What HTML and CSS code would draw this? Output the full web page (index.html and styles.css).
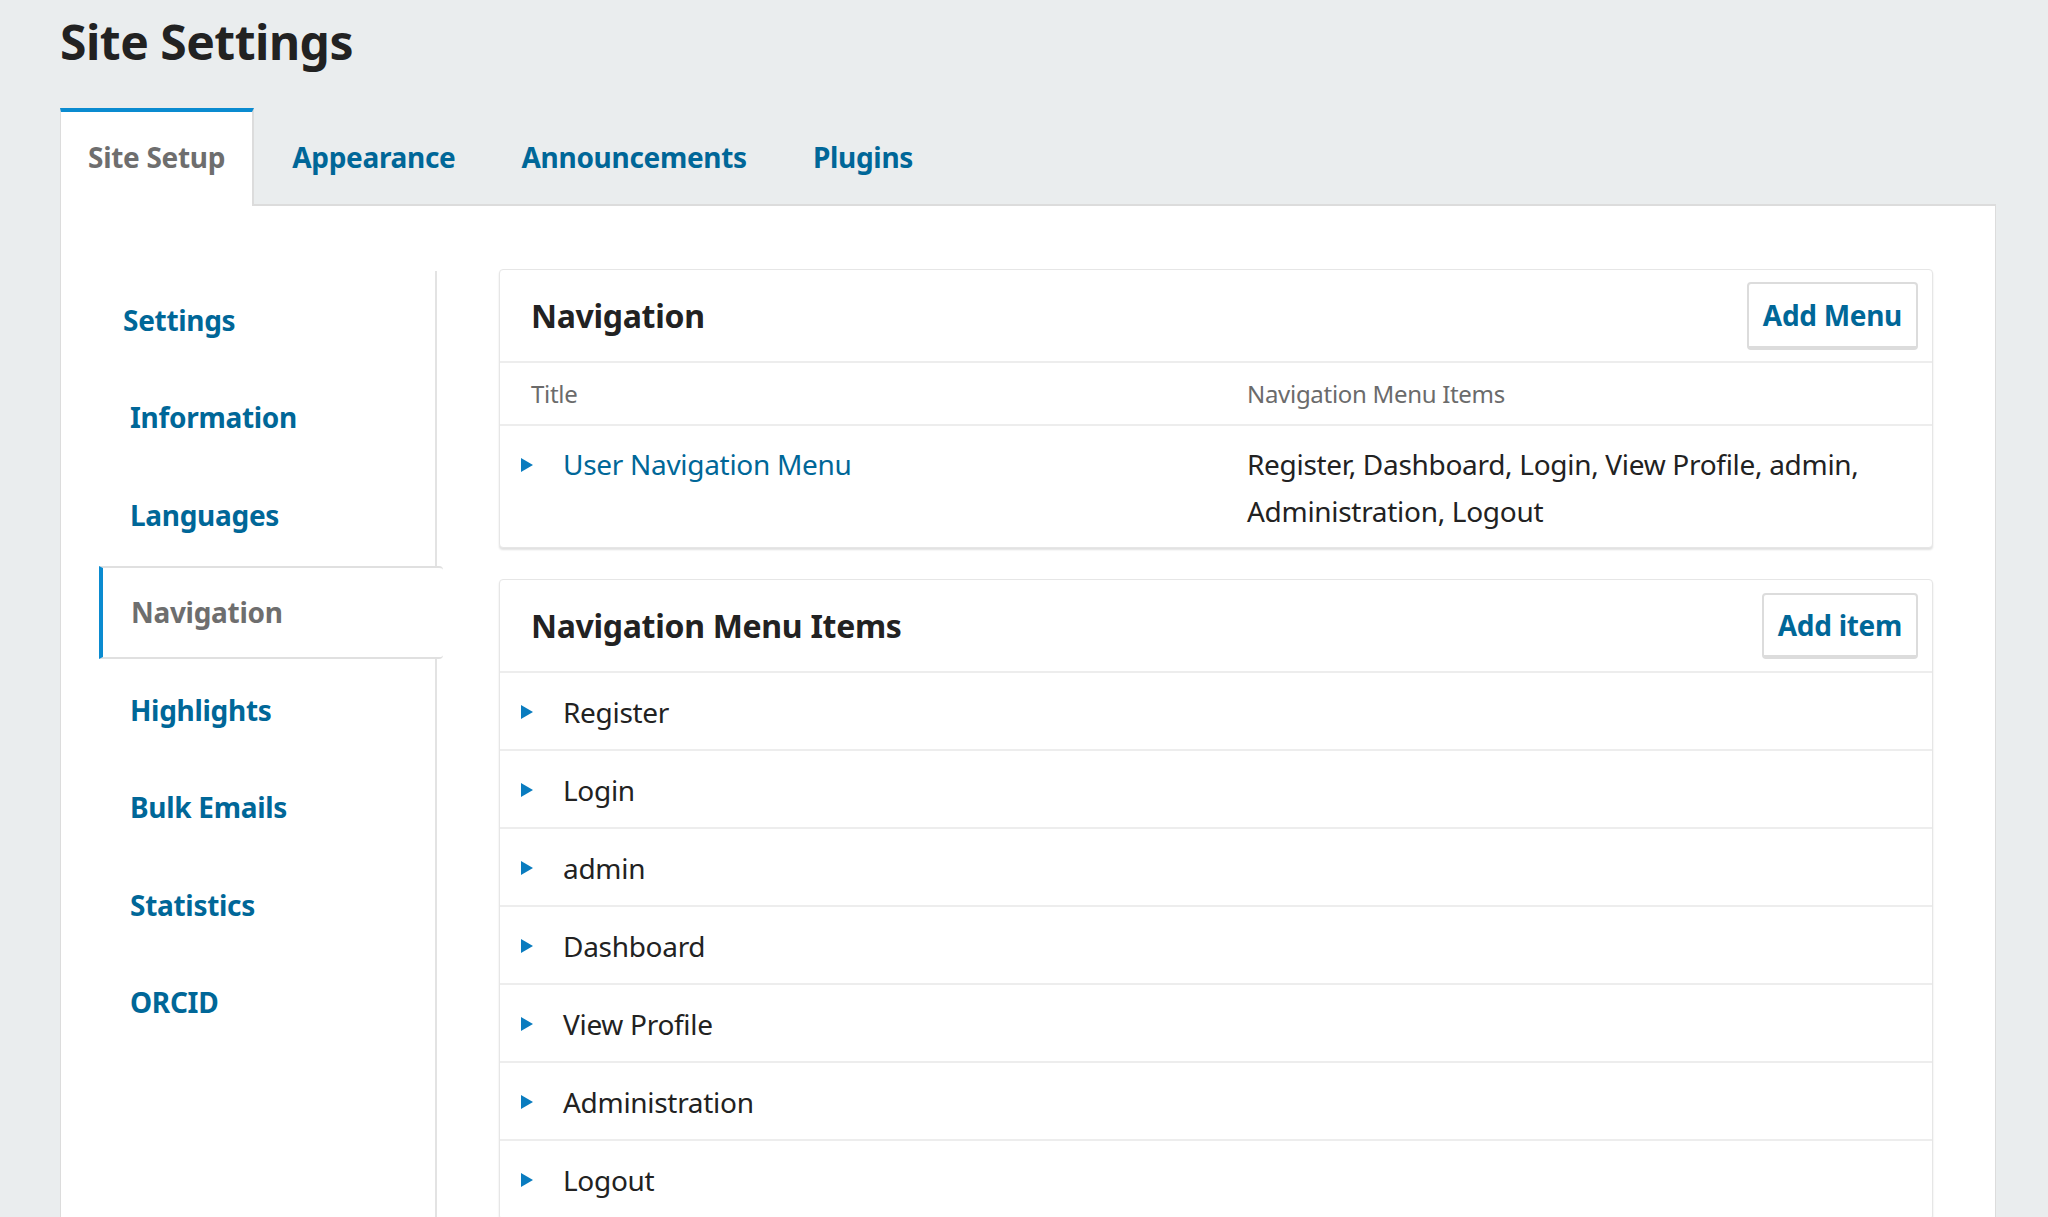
FILE: index.html
```html
<!DOCTYPE html>
<html lang="en">
<head>
<meta charset="utf-8">
<title>Site Settings</title>
<link rel="stylesheet" href="styles.css">
</head>
<body>
<div class="page">
  <h1 class="page-title">Site Settings</h1>
  <div class="tabs">
    <div class="tab tab-active">Site Setup</div>
    <div class="tab">Appearance</div>
    <div class="tab">Announcements</div>
    <div class="tab">Plugins</div>
  </div>
  <div class="panel">
    <ul class="sidenav">
      <li class="sidenav-item sidenav-first">Settings</li>
      <li class="sidenav-item">Information</li>
      <li class="sidenav-item">Languages</li>
      <li class="sidenav-item sidenav-active">Navigation</li>
      <li class="sidenav-item">Highlights</li>
      <li class="sidenav-item">Bulk Emails</li>
      <li class="sidenav-item">Statistics</li>
      <li class="sidenav-item">ORCID</li>
    </ul>
    <div class="content">
      <section class="card">
        <div class="card-header">
          <h2 class="card-title">Navigation</h2>
          <button class="btn btn-tall">Add Menu</button>
        </div>
        <div class="grid-row grid-head">
          <div class="cell">Title</div>
          <div class="cell">Navigation Menu Items</div>
        </div>
        <div class="grid-row grid-data">
          <div class="cell cell-title">
            <svg class="caret" viewBox="0 0 12 14" width="12" height="14"><path d="M0 0 L12 7 L0 14 Z"/></svg>
            <span class="link">User Navigation Menu</span>
          </div>
          <div class="cell cell-items">Register, Dashboard, Login, View Profile, admin, Administration, Logout</div>
        </div>
      </section>

      <section class="card card-items">
        <div class="card-header">
          <h2 class="card-title">Navigation Menu Items</h2>
          <button class="btn">Add item</button>
        </div>
        <div class="item-row"><svg class="caret" viewBox="0 0 12 14" width="12" height="14"><path d="M0 0 L12 7 L0 14 Z"/></svg><span>Register</span></div>
        <div class="item-row"><svg class="caret" viewBox="0 0 12 14" width="12" height="14"><path d="M0 0 L12 7 L0 14 Z"/></svg><span>Login</span></div>
        <div class="item-row"><svg class="caret" viewBox="0 0 12 14" width="12" height="14"><path d="M0 0 L12 7 L0 14 Z"/></svg><span>admin</span></div>
        <div class="item-row"><svg class="caret" viewBox="0 0 12 14" width="12" height="14"><path d="M0 0 L12 7 L0 14 Z"/></svg><span>Dashboard</span></div>
        <div class="item-row"><svg class="caret" viewBox="0 0 12 14" width="12" height="14"><path d="M0 0 L12 7 L0 14 Z"/></svg><span>View Profile</span></div>
        <div class="item-row"><svg class="caret" viewBox="0 0 12 14" width="12" height="14"><path d="M0 0 L12 7 L0 14 Z"/></svg><span>Administration</span></div>
        <div class="item-row"><svg class="caret" viewBox="0 0 12 14" width="12" height="14"><path d="M0 0 L12 7 L0 14 Z"/></svg><span>Logout</span></div>
      </section>
    </div>
  </div>
</div>
</body>
</html>
```

FILE: styles.css
```css
* { box-sizing: border-box; }

html, body {
  margin: 0;
  padding: 0;
  height: 100%;
}

body {
  background: #eaedee;
  font-family: "Noto Sans", "Open Sans", sans-serif;
  color: #222;
  overflow: hidden;
  letter-spacing: -0.3px;
}

.page {
  padding: 0 52px 0 60px;
}

.page-title {
  margin: 0;
  padding-top: 13px;
  font-size: 48px;
  line-height: 58px;
  font-weight: 700;
  color: #222;
  letter-spacing: -0.5px;
}

.tabs {
  display: flex;
  margin-top: 37px;
  height: 96px;
  position: relative;
  z-index: 1;
}

.tab {
  display: flex;
  align-items: center;
  padding: 0 28px 3px;
  margin-right: 10px;
  font-size: 28px;
  font-weight: 700;
  color: #006798;
  border-top: 4px solid transparent;
}

.tab-active {
  background: #fff;
  color: #6e6e6e;
  border-top-color: #0a8bd0;
  border-left: 1px solid #dcdcdc;
  border-right: 2px solid #dcdcdc;
  height: 98px;
  padding: 0 27px 5px;
}

.panel {
  display: flex;
  align-items: flex-start;
  background: #fff;
  border-top: 2px solid #dcdcdc;
  border-left: 1px solid #dcdcdc;
  border-right: 1px solid #dcdcdc;
  padding: 63px 62px 0 38px;
  min-height: 1100px;
}

.sidenav {
  list-style: none;
  margin: 2px 0 0;
  padding: 0;
  width: 338px;
  flex: none;
  border-right: 2px solid #e3e3e3;
  min-height: 1000px;
}

.sidenav-item {
  height: 97.5px;
  display: flex;
  align-items: center;
  padding-left: 31px;
  font-size: 28px;
  font-weight: 700;
  color: #006798;
}

.sidenav-first {
  padding-left: 24px;
}

.sidenav-active {
  height: 93px;
  margin: 2.25px -8px 2.25px 0;
  padding-left: 28px;
  background: #fff;
  color: #6e6e6e;
  border-left: 4px solid #0a8bd0;
  border-top: 2px solid #e0e0e0;
  border-bottom: 2px solid #e0e0e0;
  border-radius: 0 4px 4px 0;
  position: relative;
}

.content {
  flex: 1;
  margin-left: 62px;
  min-width: 0;
}

.card {
  background: #fff;
  border: 1px solid #e6e6e6;
  border-radius: 4px;
  box-shadow: 0 2px 2px rgba(0, 0, 0, 0.12);
}

.card-items {
  margin-top: 31px;
}

.card-header {
  height: 93px;
  display: flex;
  align-items: center;
  justify-content: space-between;
  padding: 0 14px 0 31px;
  border-bottom: 2px solid #ededed;
}

.card-title {
  margin: 0;
  font-size: 32px;
  font-weight: 700;
  color: #222;
}

.btn {
  font-family: "Noto Sans", "Open Sans", sans-serif;
  font-size: 28px;
  font-weight: 700;
  letter-spacing: -0.3px;
  color: #006798;
  background: #fff;
  border: 2px solid #dcdcdc;
  border-bottom-width: 4px;
  border-radius: 4px;
  height: 66px;
  padding: 0 14px;
  line-height: 1;
}

.btn-tall {
  height: 68px;
}

.grid-row {
  display: grid;
  grid-template-columns: 1fr 1fr;
}

.grid-head {
  height: 63px;
  align-items: center;
  border-bottom: 2px solid #ededed;
  font-size: 24px;
  color: #6b6b6b;
}

.grid-head .cell {
  padding: 0 31px;
}

.grid-data {
  padding: 15px 0 12px;
  font-size: 28px;
  line-height: 47px;
}

.cell-title {
  display: flex;
  align-items: center;
  height: 47px;
  padding-left: 21px;
}

.cell-items {
  padding: 0 31px;
  color: #222;
}

.caret {
  fill: #0a7cbf;
  flex: none;
  margin-right: 30px;
}

.link {
  color: #006798;
}

.item-row {
  height: 78px;
  display: flex;
  align-items: center;
  padding: 2px 0 0 21px;
  border-bottom: 2px solid #ededed;
  font-size: 28px;
  color: #222;
}
```
